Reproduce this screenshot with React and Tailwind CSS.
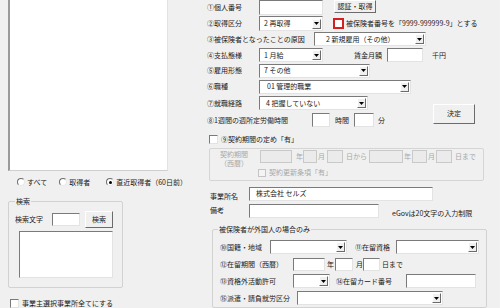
import React from "react";

const sunken =
  "border border-t-[#7a7a7a] border-l-[#7a7a7a] border-r-[#e3e3e3] border-b-[#e3e3e3]";
const raised =
  "border border-t-white border-l-white border-r-[#6b6b6b] border-b-[#6b6b6b] bg-[#f0f0f0]";

const Input = ({ cls = "", children }) => (
  <div className={`shrink-0 bg-white flex items-center whitespace-nowrap ${sunken} ${cls}`}>
    {children}
  </div>
);

const Off = ({ cls = "" }) => (
  <div className={`shrink-0 bg-[#ebebeb] border border-[#c9c9c9] ${cls}`} />
);

const Select = ({ cls = "", pad = "pl-[4px]", children }) => (
  <div className={`shrink-0 bg-white flex items-center h-[14px] whitespace-nowrap ${sunken} ${cls}`}>
    <span className={`flex-1 ${pad}`}>{children}</span>
    <span className={`mr-[1px] w-[9px] h-[10px] flex items-center justify-center ${raised}`}>
      <svg width="5" height="3" viewBox="0 0 5 3">
        <path d="M0 0h5L2.5 3z" fill="#000" />
      </svg>
    </span>
  </div>
);

const Button = ({ cls = "", children }) => (
  <div className={`shrink-0 flex items-center justify-center whitespace-nowrap ${raised} ${cls}`}>
    {children}
  </div>
);

const Check = ({ cls = "" }) => (
  <span className={`shrink-0 w-[9px] h-[9px] bg-white ${sunken} ${cls}`} />
);

const Radio = ({ on, cls = "" }) => (
  <span
    className={`shrink-0 w-[8px] h-[8px] rounded-full bg-white flex items-center justify-center border border-t-[#6d6d6d] border-l-[#6d6d6d] border-r-[#e8e8e8] border-b-[#e8e8e8] ${cls}`}
  >
    {on && <span className="w-[3px] h-[3px] rounded-full bg-black" />}
  </span>
);

const Row = ({ cls = "", children }) => (
  <div className={`flex items-center h-[17px] whitespace-nowrap ${cls}`}>{children}</div>
);

const L = ({ cls = "", children }) => <span className={`shrink-0 ${cls}`}>{children}</span>;

export default function App() {
  return (
    <div className="w-[500px] h-[308px] overflow-hidden bg-[#f0f0f0] flex text-[7px] leading-[9px] text-[#1a1a1a] font-['Noto_Sans_CJK_JP','Noto_Sans',sans-serif]">
      {/* left: list, filter and search */}
      <div className="w-[205px] shrink-0 flex flex-col">
        <div className="ml-[8px] w-[160px] h-[175px] bg-white border-l-2 border-l-[#9a9a9a] border-b border-b-[#cfcfcf] border-r border-r-[#e2e2e2]" />

        <div className="mt-[2px] h-[18px] flex items-center whitespace-nowrap">
          <Radio cls="ml-[17px]" />
          <span className="ml-[2px]">すべて</span>
          <Radio cls="ml-[12px]" />
          <span className="ml-[2px]">取得者</span>
          <Radio on cls="ml-[16px]" />
          <span className="ml-[2px]">直近取得者（60日前）</span>
        </div>

        <div className="relative mt-[10px] ml-[8px] w-[115px] border border-[#d2d2d2] rounded-[2px] pt-[9px] pb-[9px]">
          <span className="absolute left-[6px] top-[-5px] px-[1px] bg-[#f0f0f0]">検索</span>
          <div className="flex items-center h-[17px] pl-[6px]">
            <L cls="w-[37px]">検索文字</L>
            <Input cls="w-[28px] h-[13px]" />
            <Button cls="ml-[5px] w-[28px] h-[17px]">検索</Button>
          </div>
          <div className={`mt-[3px] ml-[10px] w-[94px] h-[47px] bg-white ${sunken}`} />
        </div>

        <div className="mt-[11px] ml-[10px] h-[9px] flex items-center whitespace-nowrap">
          <Check cls="w-[8px] h-[8px]" />
          <span className="ml-[3px]">事業主選択事業所全てにする</span>
        </div>
      </div>

      {/* right: detail form */}
      <div className="flex-1 flex flex-col">
        <Row cls="pl-[2px]">
          <L cls="w-[52px]">①個人番号</L>
          <Input cls="w-[64px] h-[15px]" />
          <Button cls="ml-[11px] w-[42px] h-[13px] self-start">認証・取得</Button>
        </Row>
        <Row cls="pl-[2px]">
          <L cls="w-[52px]">②取得区分</L>
          <Select cls="w-[64px] h-[15px]">2 再取得</Select>
          <span className="ml-[10px] w-[11px] h-[11px] border-2 border-[#d42020] bg-white" />
          <span className="ml-[2px]">被保険者番号を「9999-999999-9」とする</span>
        </Row>
        <Row cls="pl-[2px]">
          <L cls="w-[107px]">③被保険者となったことの原因</L>
          <Select cls="w-[112px]" pad="pl-[11px]">2 新規雇用（その他）</Select>
        </Row>
        <Row cls="pl-[2px]">
          <L cls="w-[52px]">④支払態様</L>
          <Select cls="w-[64px]">1 月給</Select>
          <span className="ml-[31px]">賃金月額</span>
          <Input cls="ml-[5px] w-[36px] h-[14px]" />
          <span className="ml-[9px]">千円</span>
        </Row>
        <Row cls="pl-[2px]">
          <L cls="w-[52px]">⑤雇用形態</L>
          <Select cls="w-[111px]">7 その他</Select>
        </Row>
        <Row cls="pl-[2px]">
          <L cls="w-[52px]">⑥職種</L>
          <Select cls="w-[152px]" pad="pl-[7px]">01 管理的職業</Select>
        </Row>

        <div className="flex">
          <div className="w-[228px] shrink-0 flex flex-col">
            <Row cls="pl-[2px]">
              <L cls="w-[52px]">⑦就職経路</L>
              <Select cls="w-[109px]" pad="pl-[6px]">4 把握していない</Select>
            </Row>
            <Row cls="pl-[2px]">
              <L cls="w-[105px]">⑧1週間の週所定労働時間</L>
              <Input cls="w-[18px] h-[14px]" />
              <span className="ml-[5px]">時間</span>
              <Input cls="ml-[5px] w-[20px] h-[14px]" />
              <span className="ml-[4px]">分</span>
            </Row>
          </div>
          <Button cls="mt-[9px] w-[42px] h-[20px]">決定</Button>
        </div>

        <Row cls="mt-[3px] pl-[4px]">
          <Check />
          <span className="ml-[3px]">⑨契約期間の定め「有」</span>
        </Row>

        <div className="mt-[1px] ml-[4px] w-[275px] h-[35px] border border-[#d5d5d5] rounded-[2px] flex flex-col text-[#a8a8a8] whitespace-nowrap">
          <div className="flex items-start pt-[1px] pl-[10px]">
            <div className="w-[40px] shrink-0 flex flex-col">
              <span>契約期間</span>
              <span>（西暦）</span>
            </div>
            <Off cls="w-[32px] h-[13px]" />
            <span className="ml-[4px] mt-[2px]">年</span>
            <Off cls="w-[14px] h-[13px]" />
            <span className="ml-[1px] mt-[2px]">月</span>
            <Off cls="ml-[2px] w-[16px] h-[13px]" />
            <span className="ml-[3px] mt-[2px]">日から</span>
            <Off cls="ml-[2px] w-[34px] h-[13px]" />
            <span className="ml-[1px] mt-[2px]">年</span>
            <Off cls="ml-[1px] w-[15px] h-[13px]" />
            <span className="ml-[1px] mt-[2px]">月</span>
            <Off cls="ml-[1px] w-[16px] h-[13px]" />
            <span className="ml-[3px] mt-[2px]">日まで</span>
          </div>
          <div className="h-[9px] flex items-center pl-[48px]">
            <span className="w-[8px] h-[8px] border border-[#c4c4c4] bg-[#f4f4f4]" />
            <span className="ml-[3px]">契約更新条項「有」</span>
          </div>
        </div>

        <div className="mt-[6px] h-[14px] flex items-center pl-[5px] whitespace-nowrap">
          <L cls="w-[39px] pt-[6px]">事業所名</L>
          <Input cls="w-[184px] h-[14px] pl-[6px]">株式会社 セルズ</Input>
        </div>
        <div className="mt-[3px] h-[14px] flex items-center pl-[5px] whitespace-nowrap">
          <L cls="w-[39px]">備考</L>
          <Input cls="w-[130px] h-[14px]" />
          <span className="ml-[13px] pt-[6px]">eGovは20文字の入力制限</span>
        </div>

        <div className="relative mt-[11px] ml-[7px] w-[275px] h-[80px] border border-[#d2d2d2] rounded-[2px] pt-[9px] pl-[7px]">
          <span className="absolute left-[5px] top-[-5px] px-[1px] bg-[#f0f0f0] whitespace-nowrap">
            被保険者が外国人の場合のみ
          </span>
          <Row>
            <L cls="w-[50px]">⑩国籍・地域</L>
            <Select cls="w-[77px]" />
            <L cls="ml-[8px] w-[41px]">⑪在留資格</L>
            <Select cls="w-[83px]" />
          </Row>
          <Row>
            <L cls="w-[73px]">⑫在留期間（西暦）</L>
            <Input cls="w-[32px] h-[13px]" />
            <span className="ml-[2px]">年</span>
            <Input cls="ml-[1px] w-[18px] h-[13px]" />
            <span className="ml-[3px]">月</span>
            <Input cls="w-[17px] h-[13px]" />
            <span className="ml-[2px]">日まで</span>
          </Row>
          <Row>
            <L cls="w-[73px]">⑬資格外活動許可</L>
            <Select cls="w-[37px]" />
            <L cls="ml-[6px] w-[70px]">⑭在留カード番号</L>
            <Input cls="w-[70px] h-[14px]" />
          </Row>
          <Row>
            <L cls="w-[77px]">⑮派遣・請負就労区分</L>
            <Select cls="w-[146px]" />
          </Row>
        </div>
      </div>
    </div>
  );
}
